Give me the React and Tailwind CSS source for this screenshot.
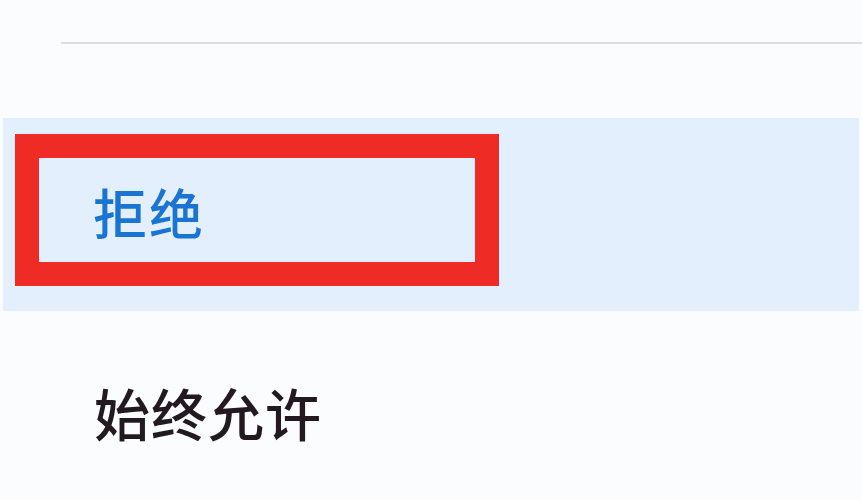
export default function App() {
  return (
    <div
      className="w-[862px] h-[500px] bg-[#fbfcfe] flex flex-col overflow-hidden"
      style={{ fontFamily: '"Noto Sans CJK SC", "Noto Sans", sans-serif' }}
    >
      {/* divider from the previous option */}
      <div className="h-[42px]" />
      <div className="ml-[61px] h-[2px] bg-[#d8dfe5]" />
      <div className="h-[74px]" />

      {/* selected row */}
      <div className="mx-[3px] h-[193px] bg-[#e3effc] pt-[16px] pl-[12px]">
        <div className="w-[484px] h-[152px] border-[24px] border-[#ee2b24] flex items-center pl-[54px] pt-[4px]">
          <span className="text-[54px] leading-none font-medium text-[#1a74d4] tracking-[2px]">拒绝</span>
        </div>
      </div>

      <div className="pl-[94px] pt-[73px]">
        <span className="text-[56px] leading-none font-medium text-[#221a20] tracking-[1px]">始终允许</span>
      </div>
    </div>
  );
}
